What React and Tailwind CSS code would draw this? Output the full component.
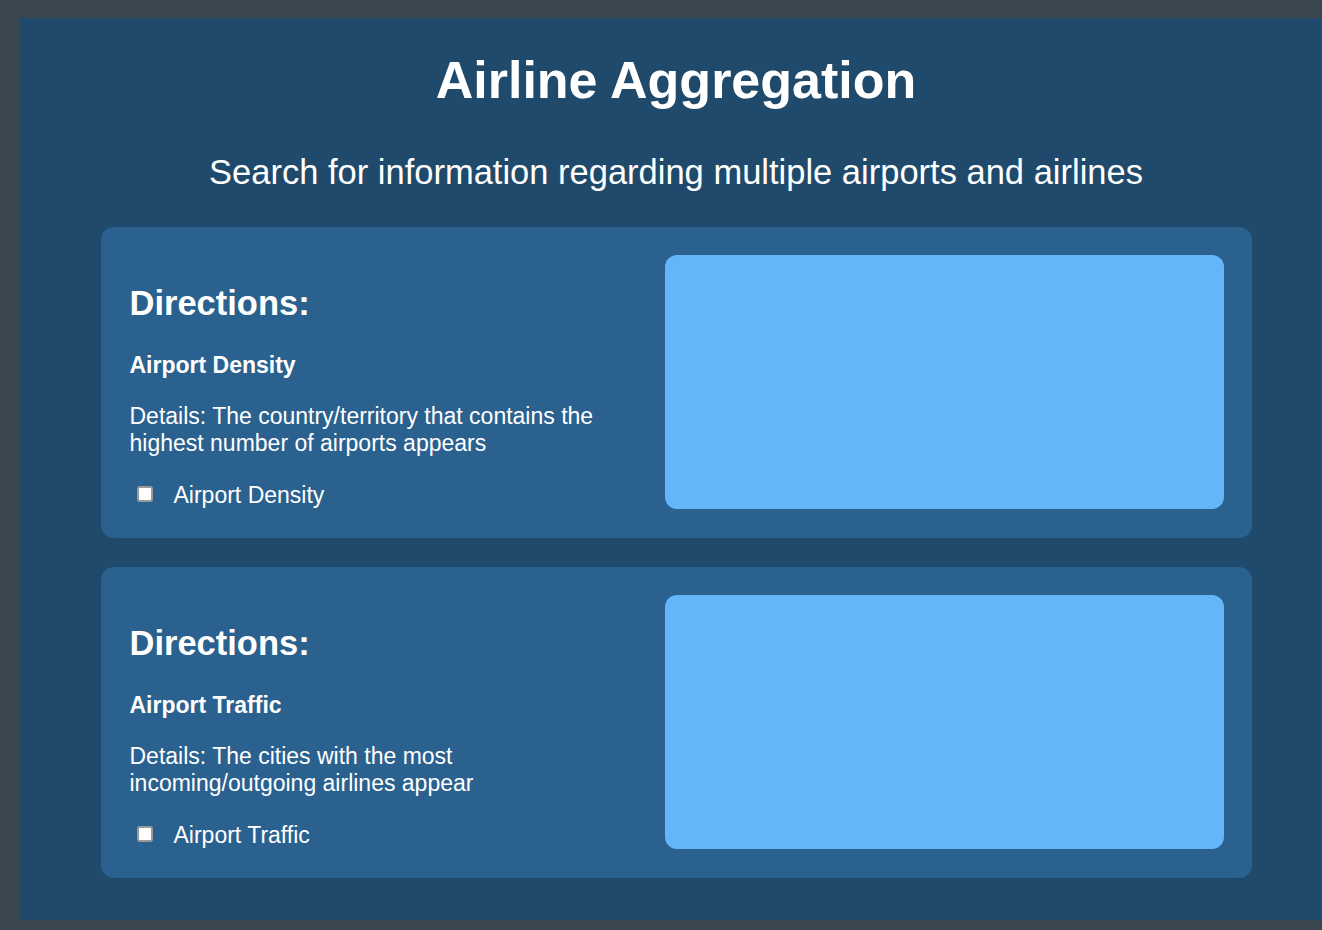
const cards = [
  {
    title: "Airport Density",
    details: "Details: The country/territory that contains the highest number of airports appears",
    label: "Airport Density",
  },
  {
    title: "Airport Traffic",
    details: "Details: The cities with the most incoming/outgoing airlines appear",
    label: "Airport Traffic",
  },
];

function DirectionCard({ title, details, label }) {
  return (
    <section className="flex w-[1151px] gap-[40px] rounded-[13px] bg-[#2a618e] px-[28px] pt-[28px] pb-[29px]">
      <div className="flex-1 pl-px pt-[31px]">
        <h2 className="text-[34.5px] font-bold leading-[34px] text-white">Directions:</h2>
        <h3 className="mt-[34px] text-[23px] font-bold leading-[23px] text-white">{title}</h3>
        <p className="mt-[26px] max-w-[490px] text-[23px] leading-[27px] text-white">{details}</p>
        <label className="mt-[27px] flex items-center text-[23px] leading-[23px] text-white">
          <input
            type="checkbox"
            className="mb-[4px] ml-[7px] h-[16px] w-[16px] appearance-none rounded-[3px] border-2 border-[#9a9a9a] bg-white"
          />
          <span className="ml-[21px]">{label}</span>
        </label>
      </div>
      <div className="h-[254px] w-[559px] shrink-0 rounded-[12px] bg-[#63b6f8]" />
    </section>
  );
}

export default function App() {
  return (
    <div
      className="min-h-screen w-full overflow-hidden bg-[#3b474e] pt-[18px] pl-[20px]"
      style={{ fontFamily: '"Liberation Sans", Arial, sans-serif' }}
    >
      <main className="flex h-[902px] w-[1312px] flex-col items-center bg-[#1f4a6b] pt-[36px]">
        <h1 className="text-[52px] font-bold leading-[52px] text-white">Airline Aggregation</h1>
        <p className="mt-[49px] text-[34.5px] leading-[34.5px] text-white">
          Search for information regarding multiple airports and airlines
        </p>
        <div className="mt-[37.5px] flex flex-col gap-[29px]">
          {cards.map((c) => (
            <DirectionCard key={c.title} {...c} />
          ))}
        </div>
      </main>
    </div>
  );
}
